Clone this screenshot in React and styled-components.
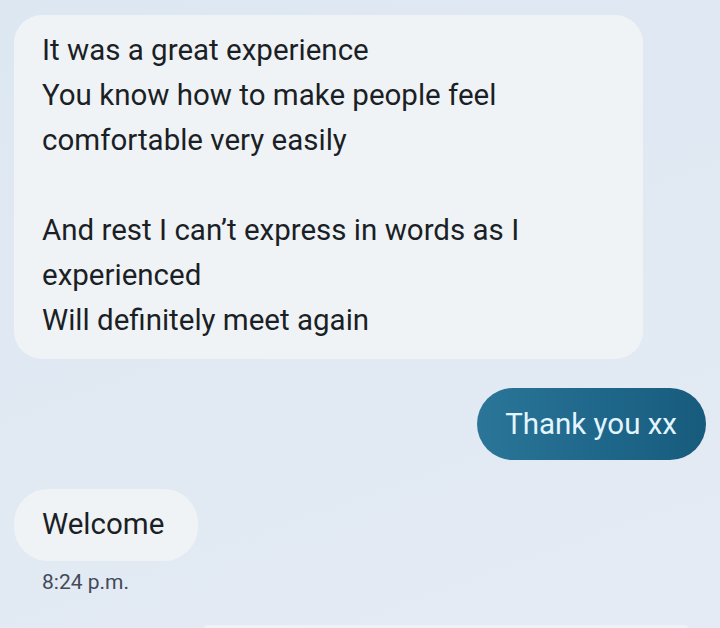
import React from "react";
import styled, { createGlobalStyle } from "styled-components";

const GlobalStyle = createGlobalStyle`
  html, body {
    margin: 0;
    padding: 0;
    background: #dfe8f2;
  }
  body {
    font-family: Roboto, "Noto Sans", sans-serif;
    overflow: hidden;
  }
`;

const Screen = styled.div`
  width: 720px;
  height: 628px;
  overflow: hidden;
  box-sizing: border-box;
  padding: 15px 14px 0 14px;
  display: flex;
  flex-direction: column;
  background: linear-gradient(160deg, #dde7f2 0%, #e1e9f3 55%, #e4ebf4 100%);
`;

const Row = styled.div`
  display: flex;
  justify-content: ${(p) => (p.$out ? "flex-end" : "flex-start")};
  margin-top: ${(p) => p.$gap || 0}px;
`;

const Bubble = styled.div`
  box-sizing: border-box;
  background: #f0f3f6;
  color: #1b1f26;
  font-size: 29.5px;
  line-height: 45px;
  border-radius: ${(p) => p.$radius || 28}px;
  padding: ${(p) => p.$pad || "16px 28px"};
  width: ${(p) => (p.$width ? p.$width + "px" : "auto")};
  white-space: pre-line;
`;

const OutBubble = styled.div`
  box-sizing: border-box;
  height: 72px;
  padding: 0 29px 0 28px;
  display: flex;
  align-items: center;
  border-radius: 36px;
  color: #e3f5ff;
  font-size: 29.5px;
  background: linear-gradient(90deg, #2a7598 0%, #1e6689 60%, #175b7c 100%);
`;

const Time = styled.div`
  margin: 9px 0 0 28px;
  font-size: 21px;
  color: #434b58;
`;

const Peek = styled.div`
  margin: 31px 18px 0 190px;
  height: 40px;
  border-radius: 28px 28px 0 0;
  background: #eef2f6;
`;

const message = `It was a great experience
You know how to make people feel
comfortable very easily

And rest I can’t express in words as I
experienced
Will definitely meet again`;

export default function App() {
  return (
    <>
      <GlobalStyle />
      <Screen>
        <Row>
          <Bubble $width={629} $pad="13px 28px 16px 28px">
            {message}
          </Bubble>
        </Row>
        <Row $out $gap={29}>
          <OutBubble>Thank you xx</OutBubble>
        </Row>
        <Row $gap={29}>
          <Bubble $radius={34} $pad="13px 34px 14px 28px">
            Welcome
          </Bubble>
        </Row>
        <Time>8:24 p.m.</Time>
        <Peek />
      </Screen>
    </>
  );
}
